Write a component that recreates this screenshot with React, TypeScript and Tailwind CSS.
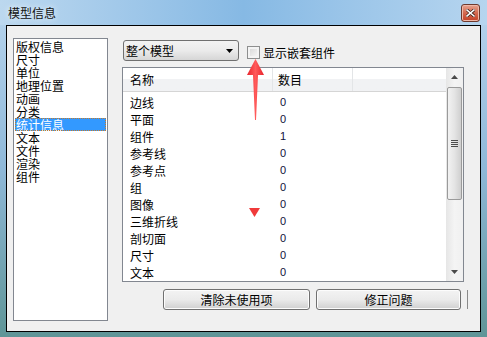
const listItems = [
  "版权信息",
  "尺寸",
  "单位",
  "地理位置",
  "动画",
  "分类",
  "统计信息",
  "文本",
  "文件",
  "渲染",
  "组件",
];

const rows: [string, string][] = [
  ["边线", "0"],
  ["平面", "0"],
  ["组件", "1"],
  ["参考线", "0"],
  ["参考点", "0"],
  ["组", "0"],
  ["图像", "0"],
  ["三维折线", "0"],
  ["剖切面", "0"],
  ["尺寸", "0"],
  ["文本", "0"],
];

const font = { fontFamily: '"Noto Sans CJK SC", "Liberation Sans", sans-serif' };

function WinButton({ label, width }: { label: string; width: string }) {
  return (
    <div
      className={`${width} h-[21px] flex items-center justify-center rounded-[3px] border border-[#707070] bg-gradient-to-b from-[#f3f3f3] via-[#ebebeb] to-[#d0d0d0] text-[12px] text-black shadow-[inset_0_0_0_1px_#fcfcfc]`}
    >
      {label}
    </div>
  );
}

export default function App() {
  return (
    <div
      className="relative w-[487px] h-[337px] flex flex-col bg-gradient-to-b from-[#b8d5ee] via-[#8fb8d8] to-[#5f9597] px-[6px] pb-[5px] overflow-hidden"
      style={font}
    >
      {/* TITLE BAR */}
      <div className="-mx-[6px] h-[25px] shrink-0 flex items-center justify-between pl-[8px] pr-[7px] bg-gradient-to-r from-[#bcd8ef] via-[#86b9e4] to-[#b6d5ef]">
        <span className="text-[12px] text-[#111] leading-none [text-shadow:0_0_6px_#ffffff]">模型信息</span>
        <div className="w-[19px] h-[18px] flex items-center justify-center rounded-[3px] border border-[#6e3a2e] bg-gradient-to-b from-[#e6a491] via-[#d3684f] to-[#c33f25] shadow-[inset_0_0_0_1px_#f0b8a8]">
          <svg width="9" height="8" viewBox="0 0 9 8">
            <path d="M1 1 L8 7 M8 1 L1 7" stroke="#3a1a14" strokeWidth="3" strokeLinecap="square" />
            <path d="M1 1 L8 7 M8 1 L1 7" stroke="#ffffff" strokeWidth="1.6" strokeLinecap="square" />
          </svg>
        </div>
      </div>

      {/* CLIENT */}
      <div className="flex-1 border border-black bg-[#f0f0f0] flex pl-[6px] pt-[12px]">
        {/* LEFT LIST */}
        <div className="w-[95px] h-[283px] border border-[#828790] bg-white pt-[1px] px-[1px]">
          {listItems.map((item, i) => (
            <div
              key={item}
              className={`h-[13px] leading-[13px] text-[12px] pl-[1px] ${
                i === 6 ? "bg-[#3399ff] text-white outline-1 outline-dotted outline-[#c47a2a] -outline-offset-1" : "text-black"
              }`}
            >
              {item}
            </div>
          ))}
        </div>

        {/* RIGHT COLUMN */}
        <div className="ml-[14px] flex flex-col">
          <div className="mt-[2px] h-[21px] flex items-center">
            <div className="ml-[1px] w-[116px] h-[21px] flex items-center justify-between rounded-[3px] border border-[#707070] bg-gradient-to-b from-[#f3f3f3] via-[#ebebeb] to-[#d6d6d6] pl-[2px] pr-[5px] text-[12px] text-black">
              <span>整个模型</span>
              <svg width="7" height="4" viewBox="0 0 7 4">
                <path d="M0 0 H7 L3.5 4 Z" fill="#000" />
              </svg>
            </div>
            <div className="ml-[8px] mt-[4px] w-[13px] h-[13px] border border-[#8e8f8f] bg-gradient-to-br from-[#d4d4d4] to-[#fbfbfb] shadow-[inset_0_0_0_2px_#f4f4f4]" />
            <span className="ml-[3px] mt-[4px] text-[12px] text-black">显示嵌套组件</span>
          </div>

          {/* TABLE */}
          <div className="mt-[6px] w-[342px] h-[215px] border border-[#828790] bg-white flex">
            <div className="flex-1 flex flex-col">
              <div className="h-[24px] flex border-b border-[#d5d5d5] bg-gradient-to-b from-white from-50% to-[#f1f2f4] to-50% text-[12px] text-black">
                <div className="w-[150px] flex items-center pl-[7px] border-r border-[#e3e5e7]">名称</div>
                <div className="w-[80px] flex items-center pl-[5px] border-r border-[#e3e5e7]">数目</div>
                <div className="flex-1" />
              </div>
              <div className="pt-[2px]">
                {rows.map(([name, count], i) => (
                  <div key={i} className="h-[17px] flex items-center text-[12px]">
                    <div className="w-[151px] pl-[7px] text-black">{name}</div>
                    <div className="pl-[6px] text-[11px] text-[#10103a]" style={{ fontFamily: '"Liberation Sans", sans-serif' }}>
                      {count}
                    </div>
                  </div>
                ))}
              </div>
            </div>

            {/* SCROLLBAR */}
            <div className="w-[17px] flex flex-col bg-gradient-to-r from-[#e6e6e6] via-[#f4f4f4] to-[#f0f0f0]">
              <div className="h-[18px] flex items-center justify-center">
                <svg width="7" height="4" viewBox="0 0 7 4">
                  <path d="M0 4 H7 L3.5 0 Z" fill="#4a4a4a" />
                </svg>
              </div>
              <div className="mx-[1px] mt-[1px] h-[113px] rounded-[2px] border border-[#9a9a9a] bg-gradient-to-r from-[#f2f2f2] via-[#e4e4e4] to-[#cfcfcf] flex items-center justify-center">
                <div className="flex flex-col gap-[1px]">
                  <div className="w-[7px] h-[1px] bg-[#4c4c4c]" />
                  <div className="w-[7px] h-[1px] bg-[#4c4c4c]" />
                  <div className="w-[7px] h-[1px] bg-[#4c4c4c]" />
                  <div className="w-[7px] h-[1px] bg-[#4c4c4c]" />
                </div>
              </div>
              <div className="flex-1" />
              <div className="h-[18px] flex items-center justify-center">
                <svg width="7" height="4" viewBox="0 0 7 4">
                  <path d="M0 0 H7 L3.5 4 Z" fill="#4a4a4a" />
                </svg>
              </div>
            </div>
          </div>

          {/* BUTTONS */}
          <div className="mt-[7px] ml-[41px] flex items-center">
            <WinButton label="清除未使用项" width="w-[147px]" />
            <div className="ml-[6px]">
              <WinButton label="修正问题" width="w-[145px]" />
            </div>
            <div className="ml-[6px] w-[1px] h-[19px] bg-[#8a8a8a]" />
          </div>
        </div>
      </div>

      {/* RED ANNOTATIONS */}
      <svg className="absolute left-0 top-0 pointer-events-none" width="487" height="337" viewBox="0 0 487 337">
        <defs>
          <linearGradient id="ar" x1="0" x2="1" y1="0" y2="0">
            <stop offset="0" stopColor="#e8242c" />
            <stop offset="0.5" stopColor="#ff5a5a" />
            <stop offset="1" stopColor="#e8242c" />
          </linearGradient>
        </defs>
        <path d="M255.5 59 L264 75 L258 75 L256 120 L255 120 L253 75 L247 75 Z" fill="url(#ar)" />
        <path d="M249 208 L260 208 L254.5 217 Z" fill="#f03a3a" />
      </svg>
    </div>
  );
}
